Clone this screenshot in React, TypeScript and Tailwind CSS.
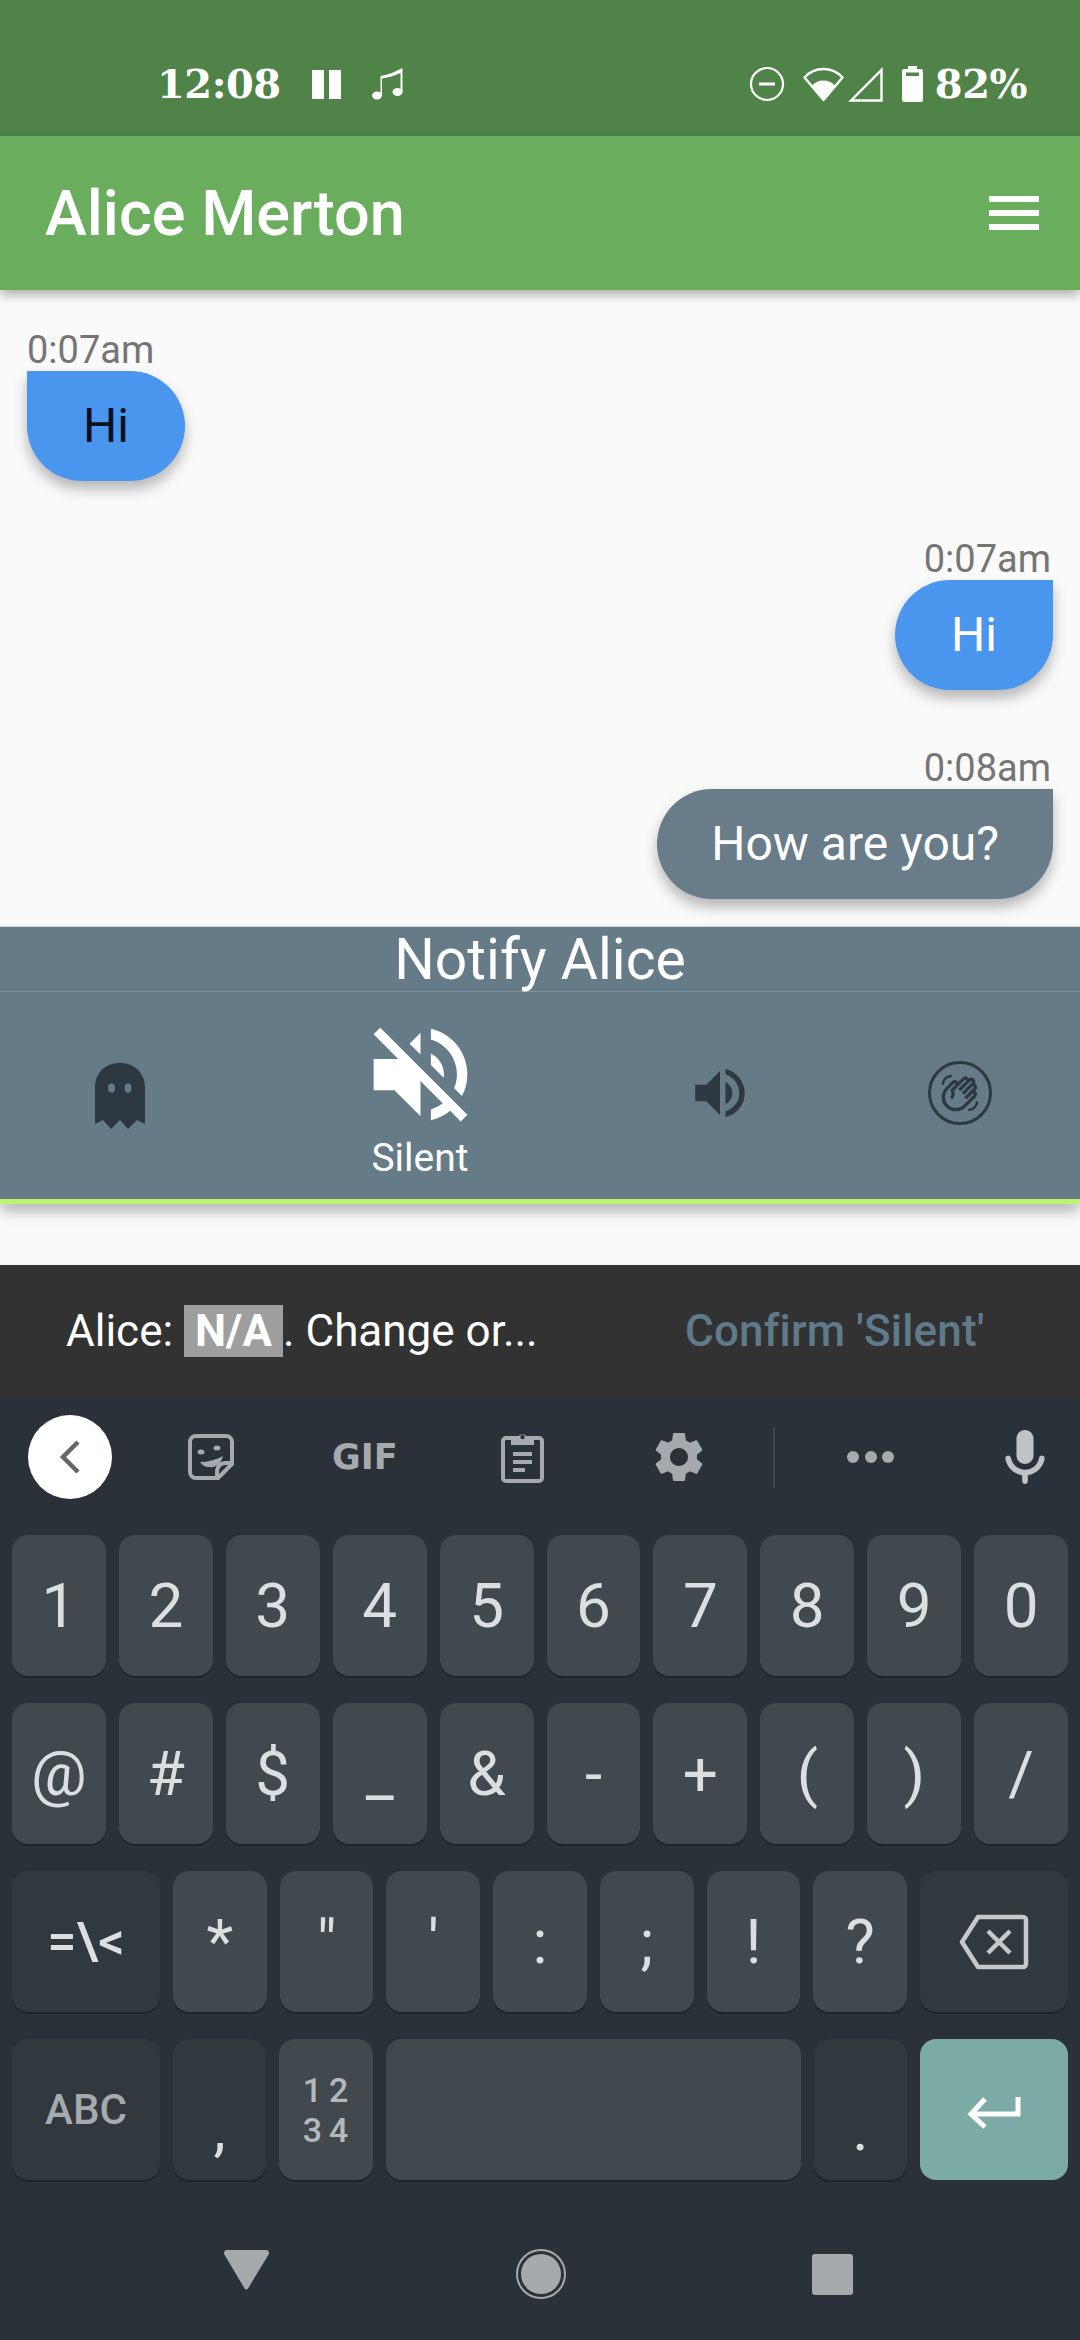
import React from "react";
import { MdOutlineWavingHand } from "react-icons/md";

const roboto = "font-['Roboto',sans-serif]";

const Message = (props: { time: string; text: string; mine?: boolean; grey?: boolean }) => {
  return (
    <div className={props.mine ? "flex flex-col items-end" : "flex flex-col items-start"}>
      <div className={props.mine ? "h-[43px] pr-[2px] text-[38px] leading-[45px] text-[#757575]" : "h-[43px] text-[38px] leading-[45px] text-[#757575]"}>
        {props.time}
      </div>
      {props.mine ? (
        <div
          className={
            props.grey
              ? "flex h-[110px] items-center rounded-l-[55px] rounded-br-[55px] bg-[#687c89] px-[54px] text-[48px] text-white shadow-[0_8px_14px_rgba(0,0,0,0.28)]"
              : "flex h-[110px] items-center rounded-l-[55px] rounded-br-[55px] bg-[#4a96ee] px-[56px] text-[48px] text-white shadow-[0_8px_14px_rgba(0,0,0,0.28)]"
          }
        >
          {props.text}
        </div>
      ) : (
        <div className="flex h-[110px] items-center rounded-r-[55px] rounded-bl-[55px] bg-[#4a96ee] px-[56px] text-[48px] text-[#07121d] shadow-[0_8px_14px_rgba(0,0,0,0.28)]">
          {props.text}
        </div>
      )}
    </div>
  );
};

const Key = (props: { label?: React.ReactNode; dark?: boolean; wide?: boolean; className?: string }) => {
  return (
    <div
      className={`flex h-[141px] items-center justify-center rounded-[16px] text-[62px] leading-none text-[#dcdfe0] shadow-[0_2px_0_#1e2429] ${
        props.wide ? "w-[148px] shrink-0" : "min-w-0 flex-1"
      } ${props.dark ? "bg-[#31383e]" : "bg-[#41494f]"} ${props.className ?? ""}`}
    >
      {props.label}
    </div>
  );
};

const GhostIcon = () => (
  <svg width="50" height="66" viewBox="0 0 50 66" fill="#2e3840">
    <path d="M0 25C0 10 10 0 25 0s25 10 25 25v36l-8-4-9 9-8-9-9 9-8-9-8 4z" />
    <ellipse cx="16.500" cy="25" rx="3.500" ry="4.500" fill="#667b88" />
    <ellipse cx="33" cy="25" rx="3.500" ry="4.500" fill="#667b88" />
  </svg>
);

const SilentIcon = () => (
  <svg width="125" height="125" viewBox="0 0 24 24" fill="#fff">
    <path d="M16.5 12c0-1.77-1.02-3.29-2.5-4.03v2.21l2.45 2.45c.03-.2.05-.41.05-.63zm2.5 0c0 .94-.2 1.82-.54 2.64l1.51 1.51C20.63 14.91 21 13.5 21 12c0-4.28-2.99-7.86-7-8.77v2.06c2.89.86 5 3.54 5 6.71zM4.27 3L3 4.27 7.73 9H3v6h4l5 5v-6.73l4.25 4.25c-.67.52-1.42.93-2.25 1.18v2.06c1.38-.31 2.63-.95 3.69-1.81L19.73 21 21 19.73l-9-9L4.27 3zM12 4L9.91 6.09 12 8.18V4z" />
  </svg>
);

const VolumeIcon = () => (
  <svg width="66" height="66" viewBox="0 0 24 24" fill="#2e3840">
    <path d="M3 9v6h4l5 5V4L7 9H3zm13.5 3c0-1.77-1.02-3.29-2.5-4.03v8.05c1.48-.73 2.5-2.25 2.5-4.02zM14 3.23v2.06c2.89.86 5 3.54 5 6.71s-2.11 5.85-5 6.71v2.06c4.01-.91 7-4.49 7-8.77s-2.99-7.86-7-8.77z" />
  </svg>
);

const StatusIcons = () => (
  <div className="ml-auto flex items-center">
    {/* do not disturb */}
    <svg width="36" height="36" viewBox="0 0 36 36" fill="none" stroke="#fff" strokeWidth="2.2">
      <circle cx="18" cy="18" r="16" />
      <path d="M10 18h16" strokeWidth="3" />
    </svg>
    {/* wifi */}
    <svg className="ml-[18px]" width="41" height="35" viewBox="0 0 41 35" fill="#fff">
      <path d="M1.5 10.5C6.5 5 13 2 20.5 2s14 3 19 8.500L20.500 33z" fill="none" stroke="#fff" strokeWidth="2.4" strokeLinejoin="round" />
      <path d="M8.500 19c3-3.500 7-5.500 12-5.500s9 2 12 5.500L20.500 33z" />
    </svg>
    {/* signal */}
    <svg className="ml-[4px]" width="35" height="35" viewBox="0 0 35 35" fill="none" stroke="#fff" strokeWidth="2.4">
      <path d="M3 33.500 33.500 3v30.500z" />
    </svg>
    {/* battery */}
    <svg className="ml-[19px]" width="21" height="36" viewBox="0 0 21 36" fill="#fff">
      <path d="M6 0h9v3h4a2 2 0 0 1 2 2v29a2 2 0 0 1-2 2H2a2 2 0 0 1-2-2V5a2 2 0 0 1 2-2h4z" />
      <rect x="4" y="6.500" width="13" height="3.500" fill="#4f8347" />
    </svg>
    <span className="ml-[12px] font-['DejaVu_Serif',serif] text-[40px] font-bold leading-none tracking-[-0.5px] text-white">82%</span>
  </div>
);

const ToolbarIcons = () => (
  <div className="flex h-[120px] items-center pl-[28px]">
    <div className="flex h-[84px] w-[84px] items-center justify-center rounded-full bg-white">
      <svg width="22" height="34" viewBox="0 0 22 34" fill="none" stroke="#666" strokeWidth="4.500">
        <path d="M19 2 4 17l15 15" />
      </svg>
    </div>
    {/* sticker */}
    <svg className="ml-[76px]" width="46" height="46" viewBox="0 0 46 46" fill="none" stroke="#a6aaad" strokeWidth="4">
      <path d="M8 2h30a6 6 0 0 1 6 6v22L30 44H8a6 6 0 0 1-6-6V8a6 6 0 0 1 6-6z" strokeLinejoin="round" />
      <path d="M44 29h-7a8 8 0 0 0-8 8v7" />
      <ellipse cx="13" cy="18" rx="3.500" ry="2.500" fill="#a6aaad" stroke="none" />
      <ellipse cx="29" cy="14" rx="3.500" ry="2.500" fill="#a6aaad" stroke="none" />
      <path d="M12 28c8 0 15-2 23-6-2 8-8 12-14 11-4 0-7-2-9-5z" fill="#a6aaad" stroke="none" />
    </svg>
    <span className="ml-[98px] w-[68px] font-['DejaVu_Sans',sans-serif] text-[35px] font-bold leading-none text-[#a6aaad]">GIF</span>
    {/* clipboard */}
    <svg className="ml-[101px]" width="43" height="52" viewBox="0 0 43 52" fill="none" stroke="#a6aaad" strokeWidth="4">
      <rect x="2" y="7" width="39" height="43" rx="3" />
      <path d="M10 6h7a5 5 0 0 1 9 0h7v8H10z" fill="#a6aaad" stroke="none" />
      <circle cx="21.500" cy="6" r="2.200" fill="#2a3138" stroke="none" />
      <path d="M12 21h19v4H12zM12 29h19v4H12zM12 37h12v4H12z" fill="#a6aaad" stroke="none" />
    </svg>
    {/* settings */}
    <svg className="ml-[111px]" width="48" height="48" viewBox="2.400 2.400 19.200 19.200" fill="#a6aaad">
      <path d="M19.140,12.940c0.040-0.300,0.060-0.610,0.060-0.940c0-0.320-0.020-0.640-0.070-0.940l2.030-1.580c0.180-0.140,0.230-0.410,0.120-0.610 l-1.920-3.320c-0.120-0.220-0.370-0.290-0.590-0.220l-2.390,0.960c-0.500-0.380-1.030-0.700-1.620-0.940L14.400,2.810c-0.040-0.240-0.240-0.410-0.480-0.410 h-3.840c-0.240,0-0.430,0.170-0.470,0.410L9.250,5.350C8.660,5.590,8.120,5.920,7.630,6.290L5.240,5.330c-0.220-0.080-0.470,0-0.590,0.220L2.740,8.870 C2.620,9.080,2.660,9.340,2.860,9.480l2.030,1.580C4.840,11.360,4.800,11.690,4.800,12s0.020,0.640,0.070,0.940l-2.030,1.580 c-0.180,0.140-0.230,0.410-0.120,0.610l1.920,3.320c0.120,0.220,0.370,0.290,0.590,0.220l2.390-0.960c0.500,0.380,1.030,0.700,1.620,0.940l0.360,2.540 c0.050,0.240,0.240,0.410,0.480,0.410h3.840c0.240,0,0.440-0.170,0.470-0.410l0.360-2.540c0.590-0.240,1.130-0.560,1.620-0.940l2.390,0.960 c0.220,0.080,0.470,0,0.590-0.220l1.920-3.320c0.120-0.220,0.070-0.470-0.120-0.610L19.140,12.940z M12,15.600c-1.980,0-3.600-1.620-3.600-3.600 s1.620-3.600,3.600-3.600s3.600,1.620,3.600,3.600S13.980,15.600,12,15.600z" />
    </svg>
    <div className="ml-[70px] h-[61px] w-[2px] bg-[#3f474e]" />
    <div className="ml-[72px] flex w-[47px] justify-between">
      <div className="h-[12px] w-[12px] rounded-full bg-[#a6aaad]" />
      <div className="h-[12px] w-[12px] rounded-full bg-[#a6aaad]" />
      <div className="h-[12px] w-[12px] rounded-full bg-[#a6aaad]" />
    </div>
    {/* mic */}
    <svg className="ml-[111px]" width="40" height="54" viewBox="5 2 14 19" fill="#bfc3c6">
      <path d="M12 14c1.660 0 3-1.340 3-3V5c0-1.660-1.340-3-3-3S9 3.340 9 5v6c0 1.660 1.340 3 3 3zm5.910-3c-.490 0-.900.360-.980.850C16.520 14.200 14.470 16 12 16s-4.520-1.800-4.930-4.150c-.080-.490-.490-.850-.980-.850-.610 0-1.090.540-1 1.140.490 3 2.890 5.350 5.910 5.780V20c0 .550.450 1 1 1s1-.450 1-1v-2.080c3.020-.430 5.420-2.780 5.910-5.780.100-.600-.390-1.140-1-1.140z" />
    </svg>
  </div>
);

const BackspaceIcon = () => (
  <svg width="70" height="56" viewBox="0 0 70 56" fill="none" stroke="#c6c9cb" strokeWidth="4.500">
    <path d="M19 3h45a3 3 0 0 1 3 3v44a3 3 0 0 1-3 3H19L3 28z" strokeLinejoin="round" />
    <path d="M29 17l22 22M51 17 29 39" />
  </svg>
);

const EnterIcon = () => (
  <svg className="mt-[6px]" width="54" height="32" viewBox="0 0 54 32" fill="none" stroke="#fff" strokeWidth="5">
    <path d="M51 0v17H5" />
    <path d="M18 2 4 17l14 13" />
  </svg>
);

export default function App() {
  return (
    <div className={`flex h-[2340px] w-[1080px] flex-col overflow-hidden bg-[#fafafa] ${roboto}`}>
      {/* status bar */}
      <div className="flex h-[136px] shrink-0 items-center bg-[#4f8347] pl-[157px] pr-[53px] pt-[32px]">
        <span className="w-[120px] font-['DejaVu_Serif',serif] text-[40px] font-bold leading-none tracking-[-0.5px] text-white">12:08</span>
        <div className="ml-[35px] flex gap-[5px]">
          <div className="h-[29px] w-[12px] bg-white" />
          <div className="h-[29px] w-[12px] bg-white" />
        </div>
        <svg className="ml-[31px]" width="32" height="34" viewBox="0 0 32 34" fill="#fff">
          <ellipse cx="5" cy="28.500" rx="5" ry="4" />
          <ellipse cx="25.500" cy="25" rx="5" ry="4" />
          <path d="M8.500 28V9C15 8 23 5 30.500 1v24h-2V6C22 9 15 11 10 11.500V28z" />
        </svg>
        <StatusIcons />
      </div>

      {/* app bar */}
      <div className="relative z-10 flex h-[154px] shrink-0 items-center justify-between bg-[#69ad5d] pl-[45px] pr-[41px] shadow-[0_5px_10px_rgba(0,0,0,0.3)]">
        <span className="text-[63px] font-medium leading-none text-white">Alice Merton</span>
        <div className="flex flex-col gap-[8px]">
          <div className="h-[6px] w-[50px] bg-white" />
          <div className="h-[6px] w-[50px] bg-white" />
          <div className="h-[6px] w-[50px] bg-white" />
        </div>
      </div>

      {/* messages */}
      <div className="flex h-[636px] shrink-0 flex-col gap-[56px] px-[27px] pt-[38px]">
        <Message time="0:07am" text="Hi" />
        <Message time="0:07am" text="Hi" mine />
        <Message time="0:08am" text="How are you?" mine grey />
      </div>

      {/* notify panel */}
      <div className="relative z-10 h-[278px] shrink-0 border-t border-[#cfd4d6] bg-[#667b88] shadow-[0_8px_12px_rgba(0,0,0,0.25)]">
        <div className="flex h-[65px] items-center justify-center border-b border-[#7f919c] text-[57px] leading-none text-white">
          Notify Alice
        </div>
        <div className="flex h-[212px] items-center border-b-[5px] border-[#bdf56e]">
          <div className="flex w-[240px] justify-center">
            <GhostIcon />
          </div>
          <div className="flex w-[360px] flex-col items-center">
            <SilentIcon />
            <span className="text-[39px] leading-[43px] text-white">Silent</span>
          </div>
          <div className="mb-[5px] flex w-[240px] justify-center">
            <VolumeIcon />
          </div>
          <div className="mb-[6px] flex w-[240px] justify-center">
            <div className="flex h-[64px] w-[64px] items-center justify-center rounded-full border-[3px] border-[#2e3840] text-[#2e3840]">
              <MdOutlineWavingHand size={40} />
            </div>
          </div>
        </div>
      </div>

      <div className="h-[61px] shrink-0" />

      {/* snackbar */}
      <div className="flex h-[132px] shrink-0 items-center bg-[#323232] pl-[66px] text-[44px] text-white">
        <div className="w-[619px] whitespace-pre">
          Alice: <span className="bg-[#9e9e9e] px-[11px] font-bold">N/A</span>. Change or...
        </div>
        <span className="font-medium tracking-[0.2px] text-[#5f7a8a]">Confirm 'Silent'</span>
      </div>

      {/* keyboard */}
      <div className="flex min-h-0 flex-1 flex-col bg-[#2a3138]">
        <ToolbarIcons />
        <div className="flex flex-col gap-[27px] px-[12px] pt-[18px]">
          <div className="flex gap-[13px]">
            {["1", "2", "3", "4", "5", "6", "7", "8", "9", "0"].map((k) => (
              <Key key={k} label={k} />
            ))}
          </div>
          <div className="flex gap-[13px]">
            {["@", "#", "$", "_", "&", "-", "+", "(", ")", "/"].map((k) => (
              <Key key={k} label={k} />
            ))}
          </div>
          <div className="flex gap-[13px]">
            <Key wide dark label={<span className="text-[52px] font-medium">=\&lt;</span>} />
            {["*", '"', "'", ":", ";", "!", "?"].map((k) => (
              <Key key={k} label={k} />
            ))}
            <Key wide dark label={<BackspaceIcon />} />
          </div>
          <div className="flex gap-[13px]">
            <Key wide dark label={<span className="text-[42px] font-medium text-[#a6aaad]">ABC</span>} />
            <Key dark className="items-end pb-[20px] text-[36px]" label="," />
            <Key
              label={
                <span className="block pl-[6px] text-center text-[34px] font-medium leading-[40px] tracking-[7px] text-[#b5b9bc]">
                  12
                  <br />
                  34
                </span>
              }
            />
            <div className="h-[141px] w-[415px] shrink-0 rounded-[16px] bg-[#41494f] shadow-[0_2px_0_#1e2429]" />
            <Key dark className="items-end pb-[20px] text-[36px]" label="." />
            <div className="flex h-[141px] w-[148px] shrink-0 items-center justify-center rounded-[16px] bg-[#7caba6]">
              <EnterIcon />
            </div>
          </div>
        </div>

        {/* nav bar */}
        <div className="mt-[69px] flex h-[50px] items-center pl-[224px]">
          <svg className="mb-[9px]" width="45" height="40" viewBox="0 0 45 40" fill="#a6aaad">
            <path d="M3 0h39a3 3 0 0 1 2.600 4.500L24 38.500a2 2 0 0 1-3.400 0L.4 4.500A3 3 0 0 1 3 0z" />
          </svg>
          <svg className="ml-[247px]" width="50" height="50" viewBox="0 0 50 50">
            <circle cx="25" cy="25" r="24" fill="none" stroke="#a6aaad" strokeWidth="2" />
            <circle cx="25" cy="25" r="20" fill="#a6aaad" />
          </svg>
          <div className="ml-[246px] h-[41px] w-[41px] rounded-[3px] bg-[#a6aaad]" />
        </div>
      </div>
    </div>
  );
}
